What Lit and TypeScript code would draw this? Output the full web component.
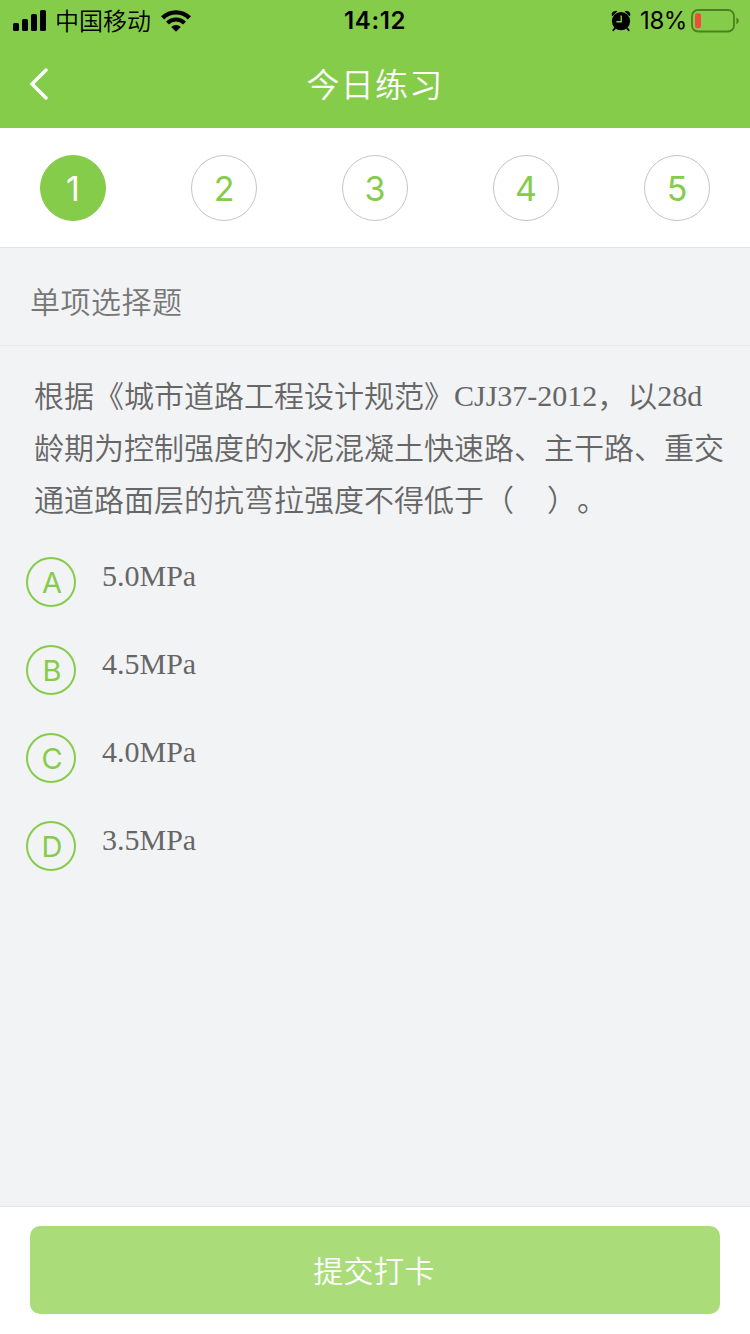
import { LitElement, html, css } from "lit";
import { customElement, property, state } from "lit/decorators.js";
import { classMap } from "lit/directives/class-map.js";

@customElement("status-bar")
class StatusBar extends LitElement {
  static styles = css`
    :host {
      display: grid;
      grid-template-columns: 1fr auto 1fr;
      height: 40px;
      color: #000;
      font: 24px/40px Inter, "Noto Sans CJK SC", sans-serif;
    }
    .left, .right { display: flex; align-items: center; }
    .left { padding-left: 13px; }
    .right { justify-content: flex-end; padding-right: 11px; }
    .carrier { margin: 0 10px 1px 9px; font-family: "Noto Sans CJK SC", sans-serif; font-weight: 350; }
    .time { font-weight: 600; font-size: 24px; letter-spacing: 0.6px; padding-top: 1px; }
    .percent { margin: 1px 4px 0 9px; font-size: 24px; letter-spacing: -0.4px; }
    svg { display: block; flex: none; }
  `;
  render() {
    return html`
      <div class="left">
        <svg width="33" height="21" viewBox="0 0 33 21">
          <rect x="0" y="13" width="6" height="8" rx="1.6" />
          <rect x="9" y="9" width="6" height="12" rx="1.6" />
          <rect x="18" y="4" width="6" height="17" rx="1.6" />
          <rect x="27" y="0" width="6" height="21" rx="1.6" />
        </svg>
        <span class="carrier">中国移动</span>
        <svg width="30" height="22" viewBox="0 0 30 22">
          <path d="M1.6 7.9 A19 19 0 0 1 28.4 7.9" fill="none" stroke="#000" stroke-width="4.4" />
          <path d="M6.5 13.1 A12 12 0 0 1 23.5 13.1" fill="none" stroke="#000" stroke-width="4" />
          <path d="M15 21.8 L10.2 17.1 A6.8 6.8 0 0 1 19.8 17.1 Z" />
        </svg>
      </div>
      <span class="time">14:12</span>
      <div class="right">
        <svg width="20" height="22" viewBox="0 0 20 22">
          <circle cx="10" cy="11.2" r="9.1" />
          <path d="M0.8 5.6 Q0 1 5.4 0.8 L6.2 1.6 L1.6 6.2 Z M19.2 5.6 Q20 1 14.6 0.8 L13.8 1.6 L18.4 6.2 Z" />
          <path d="M4.5 17.6 L2.3 20.2 M15.5 17.6 L17.7 20.2" stroke="#000" stroke-width="1.8" stroke-linecap="round" />
          <path d="M10.2 5.4 V11.8 H5.4" fill="none" stroke="#86cc4b" stroke-width="1.4" />
        </svg>
        <span class="percent">18%</span>
        <svg width="48" height="24" viewBox="0 0 48 24">
          <rect x="1" y="1" width="42" height="21.5" rx="6" fill="none" stroke="#4d801f" stroke-width="1.8" />
          <rect x="4" y="4.2" width="6" height="15" rx="2.4" fill="#f04b3c" />
          <path d="M45.4 8.4 Q47.8 9.4 47.8 11.8 Q47.8 14.2 45.4 15.2 Z" fill="#4d801f" />
        </svg>
      </div>
    `;
  }
}

@customElement("answer-option")
class AnswerOption extends LitElement {
  @property() letter = "";
  @property() text = "";
  static styles = css`
    :host { display: flex; gap: 26px; height: 50px; }
    .mark {
      box-sizing: border-box;
      width: 50px;
      height: 50px;
      border: 2px solid #86cc4b;
      border-radius: 50%;
      color: #86cc4b;
      font: 29px/47px Inter, sans-serif;
      text-align: center;
      padding-left: 2px;
    }
    .text { color: #666; font: 30px/38px "Liberation Serif", serif; }
  `;
  render() {
    return html`<span class="mark">${this.letter}</span><span class="text">${this.text}</span>`;
  }
}

@customElement("app-root")
class AppRoot extends LitElement {
  @state() current = 1;
  private options = [
    ["A", "5.0MPa"],
    ["B", "4.5MPa"],
    ["C", "4.0MPa"],
    ["D", "3.5MPa"],
  ];
  static styles = css`
    :host {
      display: flex;
      flex-direction: column;
      height: 1334px;
      background: #f2f3f5;
      font-family: "Noto Sans CJK SC", sans-serif;
      font-weight: 350;
    }
    .top { background: #86cc4b; height: 128px; }
    .nav {
      display: grid;
      grid-template-columns: 60px 1fr 60px;
      align-items: center;
      height: 88px;
      color: #fff;
    }
    .back { display: block; margin-left: 28px; }
    .title { text-align: center; font-size: 33px; line-height: 48px; letter-spacing: 1.2px; padding-bottom: 2px; }
    .tabs {
      box-sizing: border-box;
      display: flex;
      justify-content: space-between;
      height: 120px;
      padding: 27px 40px 0;
      background: #fff;
      border-bottom: 1px solid #e3e3e3;
    }
    .tab {
      box-sizing: border-box;
      width: 66px;
      height: 66px;
      border: 1px solid #c4c4c4;
      border-radius: 50%;
      color: #86cc4b;
      font: 400 34px/65px Inter, sans-serif;
      text-align: center;
    }
    .tab.active { background: #86cc4b; border-color: #86cc4b; color: #fff; }
    .kind {
      box-sizing: border-box;
      height: 98px;
      padding: 8px 30px 0;
      border-bottom: 1px solid #e9eaec;
      color: #777;
      font-size: 30px;
      line-height: 88px;
      letter-spacing: 0.5px;
    }
    .question {
      margin: 25px 20px 0 34px;
      color: #666;
      font: 350 30px/52px "Liberation Serif", "Noto Sans CJK SC", serif;
      text-spacing-trim: space-all;
    }
    .line { display: block; height: 52px; white-space: nowrap; }
    .latin { line-height: 1; vertical-align: 1px; }
    .close { margin-left: 3px; }
    .options { display: flex; flex-direction: column; gap: 38px; padding: 30px 26px 0; flex: 1; }
    .bottom { background: #fff; border-top: 1px solid #e6e6e6; padding: 19px 30px 20px; }
    .submit {
      display: block;
      width: 100%;
      height: 88px;
      border: 0;
      border-radius: 10px;
      padding: 0 2px 2px 0;
      background: #aadc7a;
      color: #fff;
      font: 350 30px/86px "Noto Sans CJK SC", sans-serif;
      letter-spacing: 0.4px;
    }
  `;
  render() {
    return html`
      <header class="top">
        <status-bar></status-bar>
        <div class="nav">
          <svg class="back" width="22" height="32" viewBox="0 0 22 32">
            <path d="M18 2 L4 16 L18 30" fill="none" stroke="#fff" stroke-width="3.4" stroke-linecap="round" />
          </svg>
          <span class="title">今日练习</span>
        </div>
      </header>
      <nav class="tabs">
        ${[1, 2, 3, 4, 5].map(
          (n) => html`<span class=${classMap({ tab: true, active: n === this.current })} @click=${() => (this.current = n)}>${n}</span>`
        )}
      </nav>
      <div class="kind">单项选择题</div>
      <div class="question">
        <span class="line">根据《城市道路工程设计规范》<span class="latin">CJJ37-2012</span>，以<span class="latin">28d</span></span>
        <span class="line">龄期为控制强度的水泥混凝土快速路、主干路、重交</span>
        <span class="line">通道路面层的抗弯拉强度不得低于（　<span class="close">）</span>。</span>
      </div>
      <div class="options">
        ${this.options.map(([letter, text]) => html`<answer-option letter=${letter} text=${text}></answer-option>`)}
      </div>
      <footer class="bottom"><button class="submit">提交打卡</button></footer>
    `;
  }
}
